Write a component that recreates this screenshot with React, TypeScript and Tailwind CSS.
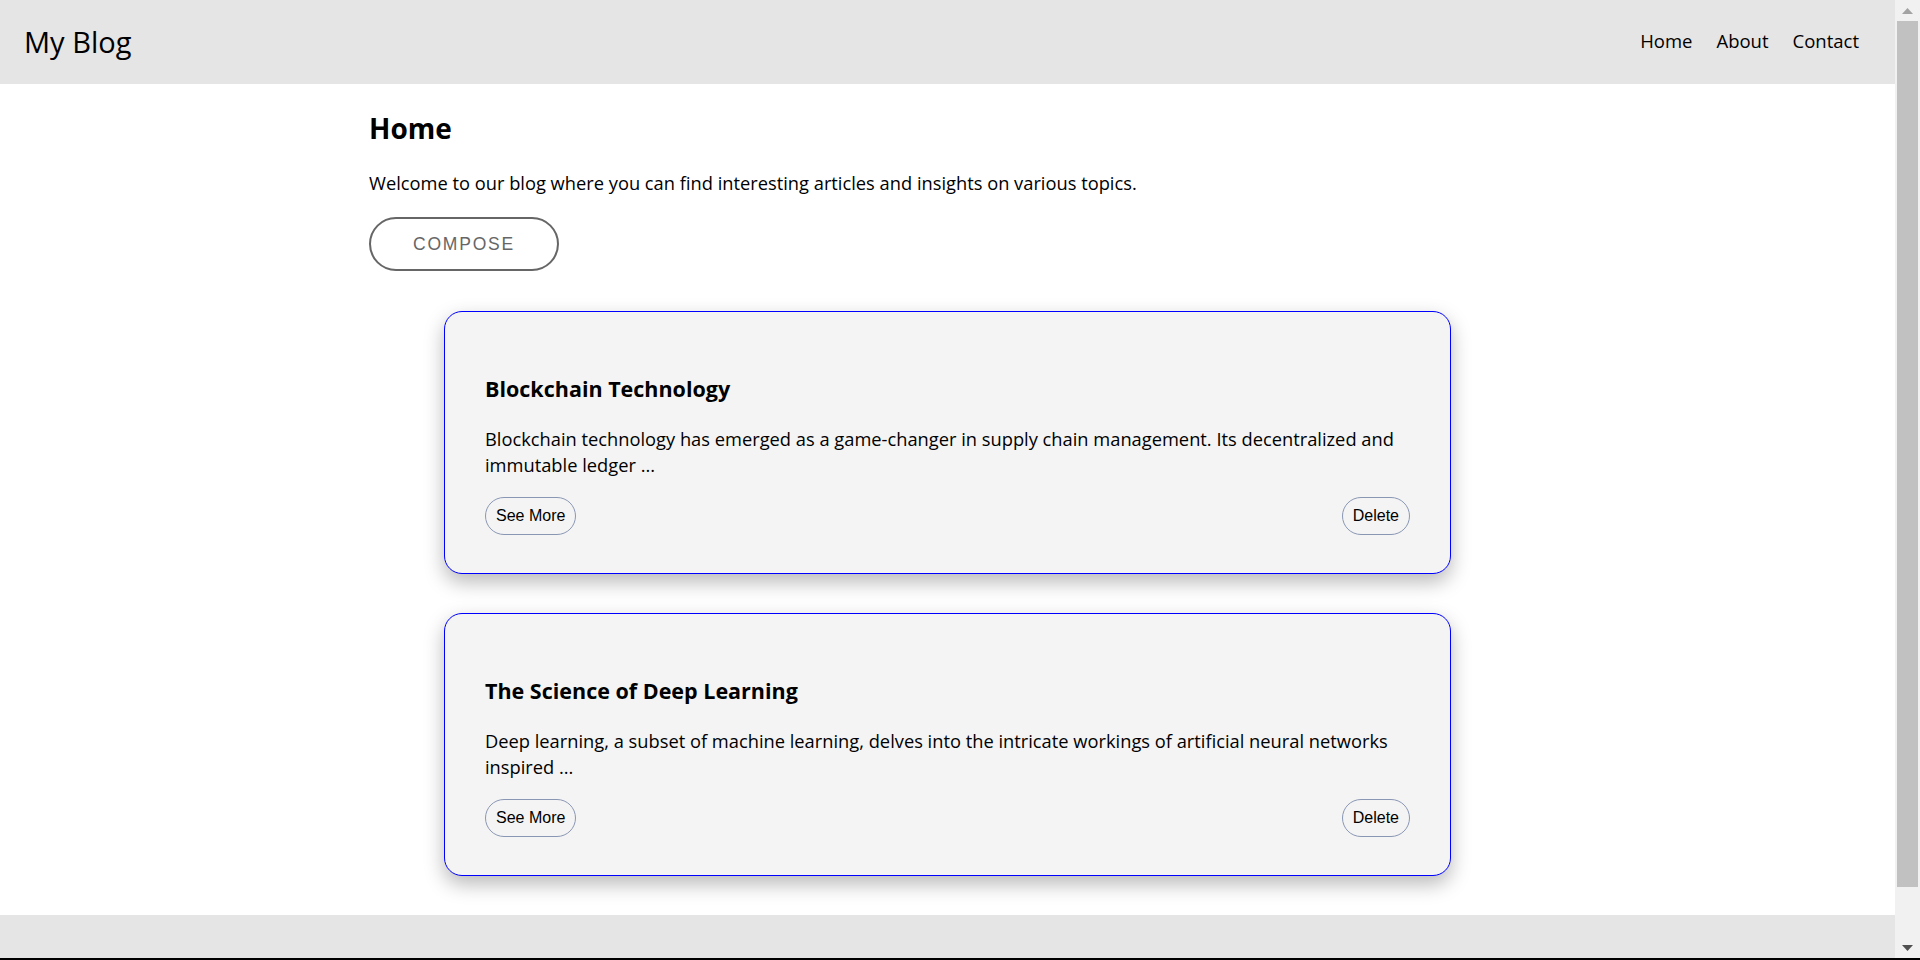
type TPost = {
  title: string;
  body: string;
};

const posts: TPost[] = [
  {
    title: "Blockchain Technology",
    body: "Blockchain technology has emerged as a game-changer in supply chain management. Its decentralized and immutable ledger ...",
  },
  {
    title: "The Science of Deep Learning",
    body: "Deep learning, a subset of machine learning, delves into the intricate workings of artificial neural networks inspired ...",
  },
];

const PostCard = ({ title, body }: TPost) => {
  return (
    <div className="w-[1007px] mx-auto bg-[#f4f4f4] border border-[#0000ff] rounded-[18px] shadow-[0_8px_20px_rgba(0,0,0,0.28)] px-[40px] pt-[61px] pb-[38px]">
      <h3 className="text-[21.5px] leading-[31px] font-bold text-black">{title}</h3>
      <p className="mt-[22px] text-[18.3px] leading-[26px] text-black">{body}</p>
      <div className="flex items-center justify-between mt-[19px]">
        <button className="h-[38px] px-[10px] rounded-full border border-[#8a97b4] text-[16px] text-black font-['Liberation_Sans',Arial,sans-serif]">
          See More
        </button>
        <button className="h-[38px] px-[10px] rounded-full border border-[#8a97b4] text-[16px] text-black font-['Liberation_Sans',Arial,sans-serif]">
          Delete
        </button>
      </div>
    </div>
  );
};

const ScrollBar = () => {
  return (
    <div className="w-[25px] shrink-0 bg-[#f1f1f1] flex flex-col">
      <div className="h-[21px] flex items-center justify-center">
        <svg width="11" height="6" viewBox="0 0 11 6">
          <path d="M5.5 0 L11 6 L0 6 Z" fill="#a3a3a3" />
        </svg>
      </div>
      <div className="h-[866px] mx-[2px] bg-[#c1c1c1]" />
      <div className="flex-1" />
      <div className="h-[21px] flex items-center justify-center">
        <svg width="11" height="6" viewBox="0 0 11 6">
          <path d="M0 0 L11 0 L5.5 6 Z" fill="#505050" />
        </svg>
      </div>
    </div>
  );
};

const App = () => {
  return (
    <div className="h-screen flex flex-col bg-white font-['Open_Sans','Noto_Sans',sans-serif] text-black overflow-hidden">
      <div className="flex-1 flex min-h-0">
        <div className="flex-1 min-w-0 overflow-hidden">
          <header className="h-[84px] bg-[#e5e5e5] flex items-center justify-between pl-[24px] pr-[36px] pb-[2px]">
            <span className="text-[29px] font-normal leading-none">My Blog</span>
            <nav className="flex items-center gap-[24px] text-[18.5px]">
              <a href="#">Home</a>
              <a href="#">About</a>
              <a href="#">Contact</a>
            </nav>
          </header>

          <main className="w-[1157px] mx-auto pb-[39px]">
            <h2 className="mt-[24px] text-[28px] leading-[40px] font-bold">Home</h2>
            <p className="mt-[21px] text-[18.3px] leading-[27px]">
              Welcome to our blog where you can find interesting articles and insights on various topics.
            </p>
            <button className="mt-[21px] w-[190px] h-[54px] rounded-full border-2 border-[#666] text-[#666] text-[17.5px] tracking-[1.8px] font-['Liberation_Sans',Arial,sans-serif]">
              COMPOSE
            </button>

            <div className="mt-[40px] flex flex-col gap-[39px]">
              {posts.map((post) => (
                <PostCard key={post.title} title={post.title} body={post.body} />
              ))}
            </div>
          </main>

          <footer className="h-[103px] bg-[#e5e5e5] flex justify-center pt-[38px] text-[18.3px] leading-[27px]">
            Made with care by the My Blog team
          </footer>
        </div>
        <ScrollBar />
      </div>
      <div className="h-[2px] bg-black shrink-0" />
    </div>
  );
};

export default App;
